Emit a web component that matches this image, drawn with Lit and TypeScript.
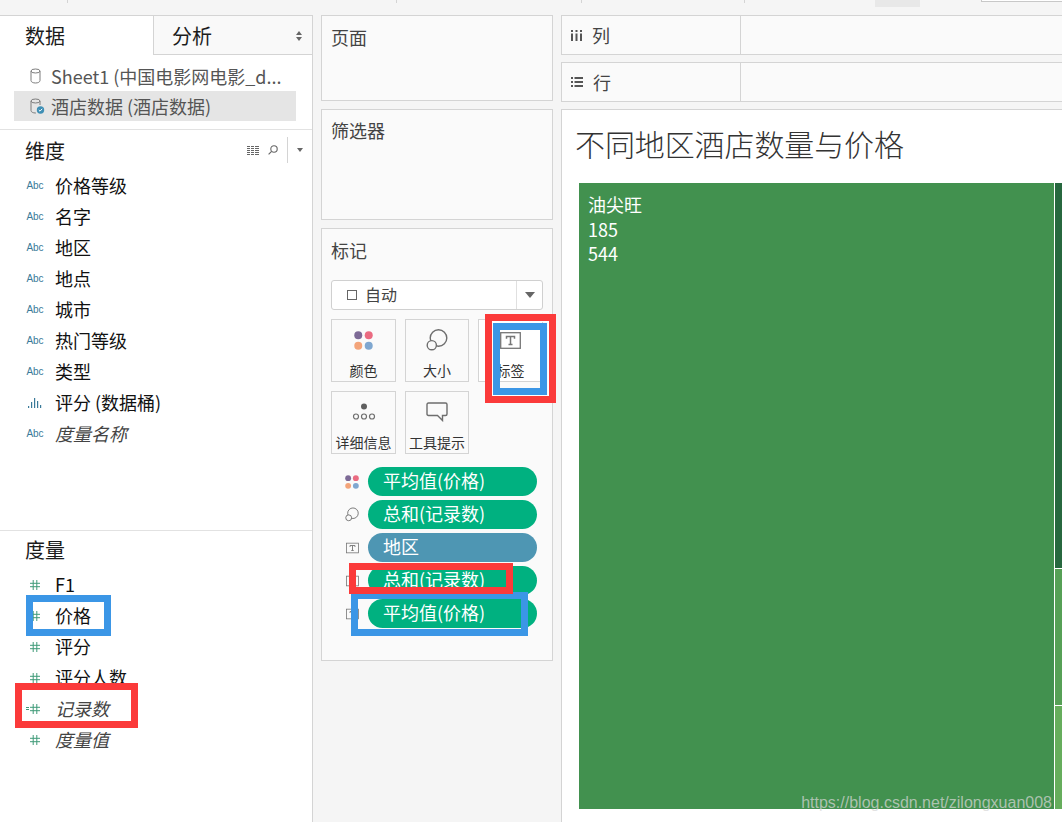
import { LitElement, html, svg, css } from 'lit'
import { customElement } from 'lit/decorators.js'

const dims = [
	{ label: '价格等级', type: 'abc' },
	{ label: '名字', type: 'abc' },
	{ label: '地区', type: 'abc' },
	{ label: '地点', type: 'abc' },
	{ label: '城市', type: 'abc' },
	{ label: '热门等级', type: 'abc' },
	{ label: '类型', type: 'abc' },
	{ label: '评分 (数据桶)', type: 'bin' },
	{ label: '度量名称', type: 'abc', calc: true },
]

const measures = [
	{ label: 'F1' },
	{ label: '价格' },
	{ label: '评分' },
	{ label: '评分人数' },
	{ label: '记录数', calc: true, dash: true },
	{ label: '度量值', calc: true },
]

const dots = (size: number) => html`<svg width=${size} height=${size} viewBox="0 0 20 20">
	<circle cx="4.5" cy="4.5" r="4.2" fill="#7d6a96" />
	<circle cx="15.5" cy="4.5" r="4.2" fill="#ea6b81" />
	<circle cx="4.5" cy="15.5" r="4.2" fill="#f3a47a" />
	<circle cx="15.5" cy="15.5" r="4.2" fill="#7fa7d0" />
</svg>`

const sizeIcon = (size: number) => html`<svg width=${size} height=${size} viewBox="0 0 22 22" fill="#fafafa" stroke="#6e6e6e" stroke-width="1.4">
	<circle cx="12.5" cy="9" r="8.3" />
	<circle cx="5.8" cy="16.2" r="4.6" />
</svg>`

const textIcon = (w: number, h: number) => html`<svg width=${w} height=${h} viewBox="0 0 21 17">
	<rect x="0.7" y="0.7" width="19.6" height="15.6" fill="none" stroke="#777" stroke-width="1.3" />
	<path d="M6.5 6.800V4.500H14.500V6.800M10.500 4.500V12.500M8.500 12.500H12.500" fill="none" stroke="#777" stroke-width="1.5" />
</svg>`

const detailIcon = html`<svg width="24" height="20" viewBox="0 0 24 20" fill="none" stroke="#6e6e6e" stroke-width="1.2">
	<circle cx="12" cy="4.500" r="3" fill="#5f5f5f" stroke="none" />
	<circle cx="4" cy="14.500" r="2.500" />
	<circle cx="12" cy="14.500" r="2.500" />
	<circle cx="20" cy="14.500" r="2.500" />
</svg>`

const tipIcon = html`<svg width="22" height="20" viewBox="0 0 22 20" fill="none" stroke="#6e6e6e" stroke-width="1.4">
	<path d="M2.500 1H19.500Q21 1 21 2.500V12Q21 13.500 19.500 13.500H16.500V18.500L11.500 13.500H2.500Q1 13.500 1 12V2.500Q1 1 2.500 1Z" />
</svg>`

const hashIcon = html`<svg width="10" height="10" viewBox="0 0 10 10" stroke="#3f9a78" stroke-width="1" fill="none">
	<path d="M3.200 0V10M6.800 0V10M0 3.300H10M0 6.700H10" />
</svg>`

const binIcon = html`<svg width="16" height="11" viewBox="0 0 16 11" fill="#3a7a99">
	<rect x="1" y="9" width="1.200" height="2" />
	<rect x="4" y="5" width="1.200" height="6" />
	<rect x="7" y="1" width="1.200" height="10" />
	<rect x="10" y="4" width="1.200" height="7" />
	<rect x="13" y="8" width="1.200" height="3" />
</svg>`

const dbIcon = (checked: boolean) => html`<svg width="16" height="16" viewBox="0 0 16 16" fill="none">
	<g stroke="#7c7c7c" stroke-width="1">
		<ellipse cx="5.500" cy="3" rx="4.500" ry="2" />
		${checked
			? svg`<path d="M1 3V12.500C1 14 3 15 5.500 15H6M10 3V7" />`
			: svg`<path d="M1 3V12.500C1 14 3 15 5.500 15C8 15 10 14 10 12.500V3" />`}
	</g>
	${checked
		? svg`<circle cx="10.500" cy="12" r="3.700" fill="#3f8fb5" /><path d="M8.800 12L10 13.200L12.200 10.800" stroke="#fff" stroke-width="1" />`
		: ''}
</svg>`

const pills = [
	{ icon: dots(14), label: '平均值(价格)' },
	{ icon: sizeIcon(15), label: '总和(记录数)' },
	{ icon: textIcon(13, 12), label: '地区', dim: true },
	{ icon: textIcon(13, 12), label: '总和(记录数)' },
	{ icon: textIcon(13, 12), label: '平均值(价格)' },
]

@customElement('app-root')
export class AppRoot extends LitElement {
	static styles = css`
		:host {
			display: block;
			font-family: 'Noto Sans CJK SC', 'Noto Sans', sans-serif;
			color: #222;
		}

		.page {
			position: relative;
			width: 1062px;
			height: 822px;
			overflow: hidden;
			background: #f5f5f5;
		}

		.toolbar {
			display: flex;
			height: 15px;
		}

		.tick {
			width: 1px;
			height: 3px;
			background: #d4d4d4;
		}

		.tick-a { margin-left: 67px; }
		.tick-b { margin-left: 328px; }
		.tick-c { margin-left: 184px; }
		.tick-d { margin-left: 162px; }

		.tool-on {
			width: 45px;
			height: 7px;
			margin-left: 130px;
			background: #e8e8e8;
		}

		.tool-box {
			width: 81px;
			height: 2px;
			margin-left: 61px;
			border: solid #c8c8c8;
			border-width: 0 0 1px 1px;
			background: #fff;
			box-sizing: border-box;
		}

		.main {
			display: flex;
			height: 807px;
		}

		/* data pane */
		.data {
			width: 313px;
			box-sizing: border-box;
			background: #fff;
			border: solid #d4d4d4;
			border-width: 1px 1px 0 0;
			flex: none;
		}

		.tabs {
			display: flex;
			height: 39px;
		}

		.tab {
			width: 153px;
			padding-left: 25px;
			box-sizing: border-box;
			font-size: 20px;
			line-height: 40px;
			color: #1c1c1c;
		}

		.tab-off {
			flex: 1;
			display: flex;
			justify-content: space-between;
			padding: 0 10px 0 18px;
			background: #f9f9f9;
			border: solid #d4d4d4;
			border-width: 0 0 1px 1px;
		}

		.sort {
			display: flex;
			flex-direction: column;
			gap: 2px;
			padding-top: 15px;
		}

		.up, .down {
			width: 0;
			height: 0;
			border-left: 3px solid transparent;
			border-right: 3px solid transparent;
		}

		.up { border-bottom: 4px solid #666; }
		.down { border-top: 4px solid #666; }

		.sources {
			padding: 6px 16px 8px 14px;
			border-bottom: 1px solid #e2e2e2;
		}

		.source {
			display: flex;
			align-items: center;
			gap: 5px;
			height: 30px;
			padding-left: 16px;
			font-size: 18px;
			color: #555;
			white-space: nowrap;
		}

		.source.on {
			background: #e5e5e5;
		}

		.section {
			border-bottom: 1px solid #e2e2e2;
		}

		.dim-section {
			height: 401px;
			box-sizing: border-box;
		}

		.head {
			display: flex;
			align-items: center;
			padding: 0 9px 0 25px;
			height: 40px;
			font-size: 20px;
			color: #1c1c1c;
		}

		.head.short {
			height: 36px;
			padding-bottom: 2px;
			box-sizing: content-box;
		}

		.head-title {
			flex: 1;
		}

		.head-tools {
			display: flex;
			align-items: center;
			gap: 9px;
		}

		.sep {
			width: 1px;
			height: 26px;
			background: #d4d4d4;
		}

		.caret {
			width: 0;
			height: 0;
			border-left: 3.5px solid transparent;
			border-right: 3.5px solid transparent;
			border-top: 4px solid #666;
		}

		.field {
			display: flex;
			align-items: center;
			height: 31px;
			font-size: 18px;
			color: #111;
		}

		.name {
			padding-bottom: 2px;
		}

		.field.calc .name {
			font-style: italic;
			color: #444;
		}

		.type {
			position: relative;
			display: flex;
			align-items: center;
			justify-content: center;
			width: 16px;
			margin-left: 27px;
			margin-right: 12px;
			font-family: 'Liberation Sans', sans-serif;
			font-size: 10px;
			color: #3a7a99;
		}

		.dash {
			position: absolute;
			left: -1px;
			top: 50%;
			width: 3px;
			height: 3px;
			margin-top: -2px;
			border: solid #3f9a78;
			border-width: 1px 0;
			box-sizing: border-box;
		}

		/* middle cards */
		.middle {
			display: flex;
			flex-direction: column;
			gap: 8px;
			width: 232px;
			margin-left: 8px;
			flex: none;
		}

		.card {
			box-sizing: border-box;
			padding: 8px 9px 0;
			background: #fafafa;
			border: 1px solid #d4d4d4;
			font-size: 18px;
			line-height: 26px;
			color: #444;
		}

		.pages { height: 86px; }
		.filters { height: 111px; padding-top: 7px; }

		.marks {
			height: 433px;
			padding-top: 8px;
		}

		.mark-type {
			display: flex;
			align-items: center;
			height: 30px;
			margin-top: 17px;
			box-sizing: border-box;
			background: #fff;
			border: 1px solid #d0d0d0;
			border-radius: 3px;
			font-size: 16px;
			color: #444;
		}

		.square {
			width: 8px;
			height: 8px;
			margin-left: 15px;
			margin-right: 8px;
			border: 1px solid #666;
		}

		.mark-name {
			flex: 1;
			padding-bottom: 2px;
		}

		.mark-drop {
			display: flex;
			align-items: center;
			justify-content: center;
			width: 25px;
			height: 100%;
			border-left: 1px solid #e0e0e0;
		}

		.mark-drop .caret {
			border-left-width: 5px;
			border-right-width: 5px;
			border-top-width: 6px;
		}

		.btns {
			display: grid;
			grid-template-columns: 65px 64px 65px;
			grid-auto-rows: 63px;
			gap: 9px;
			margin-top: 9px;
		}

		.btn {
			display: flex;
			flex-direction: column;
			align-items: center;
			box-sizing: border-box;
			padding-top: 10px;
			border: 1px solid #d4d4d4;
			font-size: 14px;
			line-height: 18px;
			color: #333;
			white-space: nowrap;
		}

		.btn.on {
			background: #fff;
		}

		.btn-icon {
			display: flex;
			align-items: center;
			justify-content: center;
			height: 20px;
			margin-bottom: 11px;
		}

		.pills {
			display: flex;
			flex-direction: column;
			gap: 4px;
			margin-top: 13px;
		}

		.pill-row {
			display: flex;
			align-items: center;
		}

		.pill-icon {
			display: flex;
			justify-content: center;
			width: 14px;
			margin-left: 14px;
			margin-right: 9px;
		}

		.pill {
			width: 169px;
			height: 29px;
			padding-left: 15px;
			box-sizing: border-box;
			border-radius: 15px;
			background: #00b180;
			color: #fff;
			font-size: 18px;
			line-height: 27px;
		}

		.pill.dim {
			background: #4e96b3;
		}

		/* worksheet */
		.sheet {
			display: flex;
			flex-direction: column;
			flex: 1;
			margin-left: 8px;
			min-width: 0;
		}

		.shelf {
			display: flex;
			height: 40px;
			margin-bottom: 7px;
			box-sizing: border-box;
			background: #fafafa;
			border: solid #d4d4d4;
			border-width: 1px 0 1px 1px;
			font-size: 18px;
			line-height: 38px;
			color: #444;
		}

		.shelf-name {
			display: flex;
			align-items: center;
			gap: 10px;
			width: 179px;
			padding-left: 9px;
			box-sizing: border-box;
			border-right: 1px solid #d4d4d4;
		}

		.canvas {
			flex: 1;
			display: flex;
			flex-direction: column;
			box-sizing: border-box;
			padding: 0 0 13px 17px;
			background: #fff;
			border: solid #d4d4d4;
			border-width: 1px 0 0 1px;
		}

		.title {
			height: 73px;
			margin-left: -4px;
			font-size: 30px;
			font-weight: 300;
			line-height: 66px;
			letter-spacing: -0.1px;
			color: #333;
		}

		.treemap {
			flex: 1;
			display: flex;
			gap: 1px;
		}

		.tile-main {
			width: 475px;
			padding: 9px;
			box-sizing: border-box;
			background: #42914f;
			color: #fff;
			font-size: 18px;
			line-height: 24.5px;
		}

		.tile-side {
			flex: 1;
			display: flex;
			flex-direction: column;
			gap: 1px;
		}

		.side-a { height: 385px; background: #27683f; }
		.side-b { height: 136px; background: #56a056; }
		.side-c { flex: 1; background: #66ad5c; }

		/* annotations drawn over the screenshot */
		.mark {
			position: absolute;
			box-sizing: border-box;
			border: 7px solid;
		}

		.red {
			border-color: #fb3a3a;
		}

		.blue {
			border-color: #3b96e6;
		}

		.m-price { left: 26px; top: 595px; width: 85px; height: 41px; }
		.m-count { left: 15px; top: 683px; width: 123px; height: 45px; }
		.m-label-r { left: 485px; top: 314px; width: 71px; height: 89px; box-shadow: inset 0 0 0 1px #fff; }
		.m-label-b { left: 493px; top: 323px; width: 54px; height: 72px; }
		.m-pill-r { left: 349px; top: 563px; width: 164px; height: 31px; }
		.m-pill-b { left: 351px; top: 592px; width: 177px; height: 44px; }

		.watermark {
			position: absolute;
			right: 10px;
			top: 793px;
			font-family: 'Liberation Sans', sans-serif;
			font-size: 16px;
			line-height: 20px;
			color: rgba(215, 215, 215, 0.72);
		}
	`

	private renderField(f: { label: string; calc?: boolean; type?: string; dash?: boolean }, measure = false) {
		let icon: unknown = 'Abc'
		if (measure) icon = hashIcon
		else if (f.type === 'bin') icon = binIcon
		return html`<div class="field ${f.calc ? 'calc' : ''}">
			<span class="type">${f.dash ? html`<i class="dash"></i>` : ''}${icon}</span>
			<span class="name">${f.label}</span>
		</div>`
	}

	render() {
		return html`
			<div class="page">
				<div class="toolbar">
					<div class="tick tick-a"></div>
					<div class="tick tick-b"></div>
					<div class="tick tick-c"></div>
					<div class="tick tick-d"></div>
					<div class="tool-on"></div>
					<div class="tool-box"></div>
				</div>
				<div class="main">
					<div class="data">
						<div class="tabs">
							<div class="tab">数据</div>
							<div class="tab tab-off">
								<span>分析</span>
								<span class="sort"><i class="up"></i><i class="down"></i></span>
							</div>
						</div>
						<div class="sources">
							<div class="source">${dbIcon(false)}<span>Sheet1 (中国电影网电影_d...</span></div>
							<div class="source on">${dbIcon(true)}<span>酒店数据 (酒店数据)</span></div>
						</div>
						<div class="section dim-section">
							<div class="head">
								<span class="head-title">维度</span>
								<span class="head-tools">
									<svg width="12" height="9" viewBox="0 0 12 9" fill="#666">
										<path d="M0 0H3V1H0ZM4 0H7V1H4ZM8 0H12V1H8ZM0 2H3V3H0ZM4 2H7V3H4ZM8 2H12V3H8ZM0 4H3V5H0ZM4 4H7V5H4ZM8 4H12V5H8ZM0 6H3V7H0ZM4 6H7V7H4ZM8 6H12V7H8ZM0 8H3V9H0ZM4 8H7V9H4ZM8 8H12V9H8Z" />
									</svg>
									<svg width="10" height="10" viewBox="0 0 10 10" fill="none" stroke="#666" stroke-width="1.100">
										<circle cx="6" cy="4" r="3.200" />
										<path d="M3.600 6.400L0.600 9.400" />
									</svg>
									<i class="sep"></i>
									<i class="caret"></i>
								</span>
							</div>
							${dims.map((f) => this.renderField(f))}
						</div>
						<div class="head short"><span class="head-title">度量</span></div>
						${measures.map((f) => this.renderField(f, true))}
					</div>

					<div class="middle">
						<div class="card pages">页面</div>
						<div class="card filters">筛选器</div>
						<div class="card marks">
							<div>标记</div>
							<div class="mark-type">
								<i class="square"></i>
								<span class="mark-name">自动</span>
								<span class="mark-drop"><i class="caret"></i></span>
							</div>
							<div class="btns">
								<div class="btn"><span class="btn-icon">${dots(19)}</span>颜色</div>
								<div class="btn"><span class="btn-icon">${sizeIcon(22)}</span>大小</div>
								<div class="btn on"><span class="btn-icon">${textIcon(21, 17)}</span>标签</div>
								<div class="btn"><span class="btn-icon">${detailIcon}</span>详细信息</div>
								<div class="btn"><span class="btn-icon">${tipIcon}</span>工具提示</div>
							</div>
							<div class="pills">
								${pills.map(
									(p) => html`<div class="pill-row">
										<span class="pill-icon">${p.icon}</span>
										<span class="pill ${p.dim ? 'dim' : ''}">${p.label}</span>
									</div>`
								)}
							</div>
						</div>
					</div>

					<div class="sheet">
						<div class="shelf">
							<div class="shelf-name">
								<svg width="11" height="11" viewBox="0 0 11 11" fill="#555">
									<path d="M0 0H2V2H0ZM4.500 0H6.500V2H4.500ZM9 0H11V2H9ZM0 3.500H2V11H0ZM4.500 3.500H6.500V11H4.500ZM9 3.500H11V11H9Z" />
								</svg>
								<span>列</span>
							</div>
						</div>
						<div class="shelf">
							<div class="shelf-name">
								<svg width="12" height="10" viewBox="0 0 12 10" fill="#555">
									<path d="M0 0H2V2H0ZM3.500 0H12V2H3.500ZM0 4H2V6H0ZM3.500 4H12V6H3.500ZM0 8H2V10H0ZM3.500 8H12V10H3.500Z" />
								</svg>
								<span>行</span>
							</div>
						</div>
						<div class="canvas">
							<div class="title">不同地区酒店数量与价格</div>
							<div class="treemap">
								<div class="tile-main">油尖旺<br />185<br />544</div>
								<div class="tile-side">
									<div class="side-a"></div>
									<div class="side-b"></div>
									<div class="side-c"></div>
								</div>
							</div>
						</div>
					</div>
				</div>

				<div class="mark blue m-price"></div>
				<div class="mark red m-count"></div>
				<div class="mark red m-label-r"></div>
				<div class="mark blue m-label-b"></div>
				<div class="mark blue m-pill-b"></div>
				<div class="mark red m-pill-r"></div>
				<div class="watermark">https://blog.csdn.net/zilongxuan008</div>
			</div>
		`
	}
}
